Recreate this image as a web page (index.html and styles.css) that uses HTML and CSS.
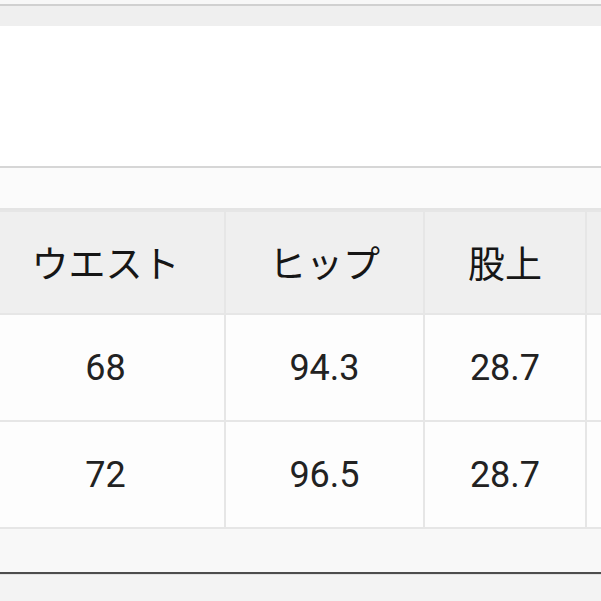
FILE: index.html
```html
<!DOCTYPE html>
<html lang="ja">
<head>
<meta charset="utf-8">
<link rel="stylesheet" href="styles.css">
</head>
<body>
<div class="page">
  <div class="top-edge"></div>
  <div class="top-band"></div>
  <div class="blank"></div>
  <div class="gap"></div>
  <div class="table-wrap">
    <table class="size-table">
      <colgroup>
        <col class="c1"><col class="c2"><col class="c3"><col class="c4">
      </colgroup>
      <thead>
        <tr><th>ウエスト</th><th>ヒップ</th><th>股上</th><th></th></tr>
      </thead>
      <tbody>
        <tr class="r1"><td>68</td><td>94.3</td><td>28.7</td><td></td></tr>
        <tr class="r2"><td>72</td><td>96.5</td><td>28.7</td><td></td></tr>
      </tbody>
    </table>
  </div>
  <div class="after"></div>
  <div class="bottom"></div>
</div>
</body>
</html>
```
FILE: styles.css
```css
html, body {
  margin: 0;
  padding: 0;
  background: #ffffff;
  overflow: hidden;
}
.page {
  width: 601px;
  height: 601px;
  overflow: hidden;
  font-family: Roboto, "Noto Sans CJK JP", sans-serif;
  color: #222222;
}
.top-edge {
  height: 4px;
  background: #f7f7f7;
}
.top-band {
  height: 20px;
  background: #efefef;
  border-top: 2px solid #d0d0d0;
}
.blank {
  height: 140px;
  background: #ffffff;
  border-bottom: 2px solid #d6d6d6;
}
.gap {
  height: 40px;
  background: #fbfbfb;
  border-bottom: 2px solid #e4e4e4;
}
.table-wrap {
  width: 601px;
  overflow: hidden;
}
.size-table {
  margin-left: -15px;
  border-collapse: separate;
  border-spacing: 2px;
  background: #e6e6e6;
  table-layout: fixed;
  width: 804px;
}
.c1 { width: 237px; }
.c2 { width: 197px; }
.c3 { width: 160px; }
.c4 { width: 200px; }
.size-table th,
.size-table td {
  padding: 0;
  text-align: center;
  vertical-align: middle;
}
.size-table th {
  height: 101px;
  background: #efefef;
  font-family: "Noto Sans CJK JP", sans-serif;
  font-weight: 400;
  font-size: 37px;
  line-height: 1;
  color: #161616;
}
.size-table td {
  height: 105px;
  background: #fdfdfd;
  font-size: 36px;
  line-height: 1;
  color: #222222;
}
.after {
  height: 43px;
  background: #f8f8f8;
  border-bottom: 2px solid #4d4d4d;
}
.bottom {
  height: 40px;
  background: #f3f3f3;
  border-top: 1px solid #e2e2e2;
}
```
